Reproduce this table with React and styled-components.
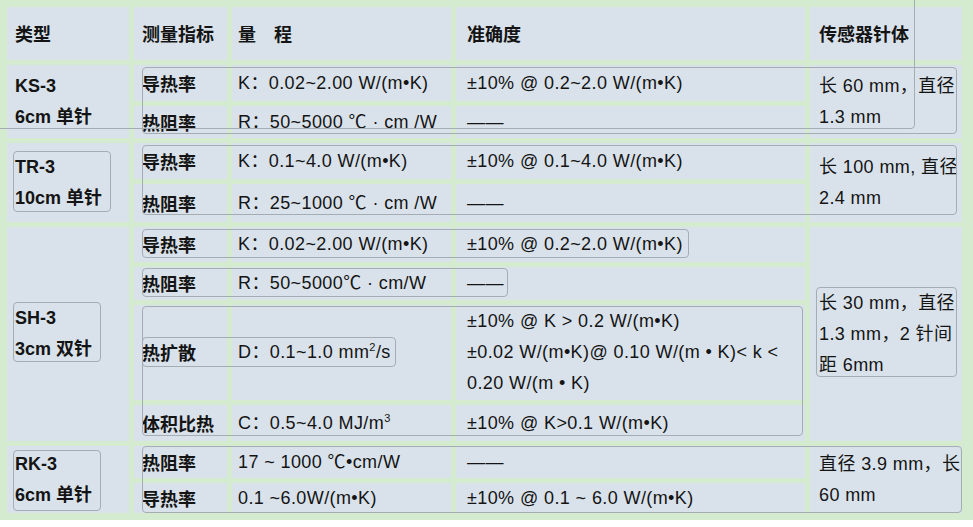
import React from 'react';
import styled, { createGlobalStyle } from 'styled-components';

const GlobalStyle = createGlobalStyle`
  html, body {
    margin: 0;
    padding: 0;
    background: #ffffff;
  }
  body {
    font-family: "Liberation Sans", "Noto Sans CJK SC", sans-serif;
    color: #141414;
  }
`;

const Table = styled.div`
  position: relative;
  width: 973px;
  height: 520px;
  box-sizing: border-box;
  padding: 7px 11px 0 7px;
  background: #d4ebd0;
  display: grid;
  grid-template-columns: 122px 93px 219px 349px 152px;
  grid-template-rows: 53px 36px 32px 36px 38px 35px 33px 95px 36px 32px 30px;
  gap: 5px;
`;

const padByCol = { 1: 8, 2: 8, 3: 6, 4: 11, 5: 9 };

const Cell = styled.div`
  grid-column: ${p => p.$col};
  grid-row: ${p => p.$row} / span ${p => p.$span || 1};
  background: #d9e2ea;
  display: flex;
  flex-direction: column;
  justify-content: center;
  padding: 0 0 0 ${p => padByCol[p.$col]}px;
  font-size: 18px;
  line-height: 31px;
  font-weight: ${p => (p.$bold ? 700 : 400)};
  letter-spacing: ${p => (p.$bold ? 0 : 0.4)}px;
  white-space: nowrap;
  overflow: hidden;
`;

const Cjk = styled.span`
  font-family: "Noto Sans CJK SC", sans-serif;
`;

const Sup = styled.sup`
  font-size: 11px;
  line-height: 0;
  vertical-align: 7px;
`;

const Frame = styled.div`
  position: absolute;
  left: ${p => p.$x}px;
  top: ${p => p.$y}px;
  width: ${p => p.$w}px;
  height: ${p => p.$h}px;
  box-sizing: border-box;
  border: 1px solid #a4acb4;
  border-radius: 4px;
  pointer-events: none;
`;

const headers = ['类型', '测量指标', '量　程', '准确度', '传感器针体'];

const groups = [
  { row: 2, span: 2, name: ['KS-3', '6cm 单针'], probe: ['长 60 mm，直径', '1.3 mm'] },
  { row: 4, span: 2, name: ['TR-3', '10cm 单针'], probe: ['长 100 mm, 直径', '2.4 mm'] },
  { row: 6, span: 4, name: ['SH-3', '3cm 双针'], probe: ['长 30 mm，直径', '1.3 mm，2 针间', '距 6mm'] },
  { row: 10, span: 2, name: ['RK-3', '6cm 单针'], probe: ['直径 3.9 mm，长', '60 mm'] },
];

const rows = [
  { row: 2, label: '导热率', range: 'K：0.02~2.00 W/(m•K)', acc: ['±10% @ 0.2~2.0 W/(m•K)'] },
  { row: 3, label: '热阻率', range: 'R：50~5000 ℃ · cm /W', acc: ['——'] },
  { row: 4, label: '导热率', range: 'K：0.1~4.0 W/(m•K)', acc: ['±10% @ 0.1~4.0 W/(m•K)'] },
  { row: 5, label: '热阻率', range: 'R：25~1000 ℃ · cm /W', acc: ['——'] },
  { row: 6, label: '导热率', range: 'K：0.02~2.00 W/(m•K)', acc: ['±10% @ 0.2~2.0 W/(m•K)'] },
  { row: 7, label: '热阻率', range: 'R：50~5000℃ · cm/W', acc: ['——'] },
  {
    row: 8,
    label: '热扩散',
    range: <>D：0.1~1.0 mm<Sup>2</Sup>/s</>,
    acc: ['±10% @ K > 0.2 W/(m•K)', '±0.02 W/(m•K)@ 0.10 W/(m • K)< k <', '0.20 W/(m • K)'],
  },
  { row: 9, label: '体积比热', range: <>C：0.5~4.0 MJ/m<Sup>3</Sup></>, acc: ['±10% @ K>0.1 W/(m•K)'] },
  { row: 10, label: '热阻率', range: '17 ~ 1000 ℃•cm/W', acc: ['——'] },
  { row: 11, label: '导热率', range: '0.1 ~6.0W/(m•K)', acc: ['±10% @ 0.1 ~ 6.0 W/(m•K)'] },
];

// grey text-frame outlines that sit over the table
const frames = [
  [-6, -6, 915, 129],
  [142, 67, 957, 134],
  [13, 151, 111, 212],
  [142, 145, 957, 215],
  [142, 229, 689, 258],
  [142, 268, 508, 297],
  [142, 306, 803, 436],
  [142, 337, 396, 367],
  [13, 302, 101, 362],
  [816, 287, 957, 377],
  [13, 450, 101, 511],
  [142, 446, 962, 513],
];

function Lines({ items }) {
  return items.map((t, i) => <div key={i}>{t}</div>);
}

export default function App() {
  return (
    <>
      <GlobalStyle />
      <Table>
        {headers.map((h, i) => (
          <Cell key={h} $col={i + 1} $row={1} $bold>
            <Cjk>{h}</Cjk>
          </Cell>
        ))}

        {groups.map(g => (
          <React.Fragment key={g.name[0]}>
            <Cell $col={1} $row={g.row} $span={g.span} $bold>
              <Lines items={g.name} />
            </Cell>
            <Cell $col={5} $row={g.row} $span={g.span}>
              <Lines items={g.probe} />
            </Cell>
          </React.Fragment>
        ))}

        {rows.map(r => (
          <React.Fragment key={r.row}>
            <Cell $col={2} $row={r.row} $bold>
              <Cjk>{r.label}</Cjk>
            </Cell>
            <Cell $col={3} $row={r.row}>
              <div>{r.range}</div>
            </Cell>
            <Cell $col={4} $row={r.row}>
              <Lines items={r.acc} />
            </Cell>
          </React.Fragment>
        ))}

        {frames.map(([x1, y1, x2, y2], i) => (
          <Frame key={i} $x={x1} $y={y1} $w={x2 - x1} $h={y2 - y1} />
        ))}
      </Table>
    </>
  );
}
